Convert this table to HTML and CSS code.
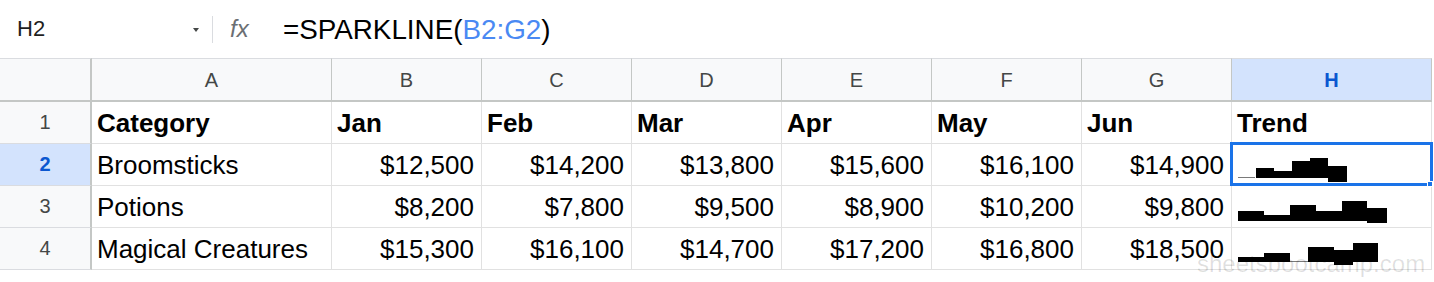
FILE: index.html
```html
<!DOCTYPE html>
<html>
<head>
<meta charset="utf-8">
<link rel="stylesheet" href="styles.css">
</head>
<body>
<div class="page">
  <div class="formula-bar">
    <div class="name-box"><span class="name">H2</span><span class="caret"></span></div>
    <div class="sep"></div>
    <div class="fx">fx</div>
    <div class="formula">=SPARKLINE(<span class="ref">B2:G2</span>)</div>
  </div>
  <div class="grid">
    <div class="hd corner"></div>
    <div class="hd col">A</div>
    <div class="hd col">B</div>
    <div class="hd col">C</div>
    <div class="hd col">D</div>
    <div class="hd col">E</div>
    <div class="hd col">F</div>
    <div class="hd col">G</div>
    <div class="hd col sel">H</div>

    <div class="rh">1</div>
    <div class="c b">Category</div>
    <div class="c b">Jan</div>
    <div class="c b">Feb</div>
    <div class="c b">Mar</div>
    <div class="c b">Apr</div>
    <div class="c b">May</div>
    <div class="c b">Jun</div>
    <div class="c b">Trend</div>

    <div class="rh sel">2</div>
    <div class="c">Broomsticks</div>
    <div class="c n">$12,500</div>
    <div class="c n">$14,200</div>
    <div class="c n">$13,800</div>
    <div class="c n">$15,600</div>
    <div class="c n">$16,100</div>
    <div class="c n">$14,900</div>
    <div class="c spark active">
      <svg class="sl" width="199" height="41" viewBox="0 0 199 41">
        <rect class="ln" x="6" y="33" width="17" height="1"/>
        <rect x="24" y="24" width="18" height="10"/>
        <rect x="42" y="27" width="18" height="7"/>
        <rect x="60" y="17" width="18" height="17"/>
        <rect x="78" y="14" width="18" height="20"/>
        <rect x="96" y="22" width="19" height="16"/>
      </svg>
      <span class="handle"></span>
    </div>

    <div class="rh">3</div>
    <div class="c">Potions</div>
    <div class="c n">$8,200</div>
    <div class="c n">$7,800</div>
    <div class="c n">$9,500</div>
    <div class="c n">$8,900</div>
    <div class="c n">$10,200</div>
    <div class="c n">$9,800</div>
    <div class="c spark">
      <svg class="sl" width="199" height="41" viewBox="0 0 199 41">
        <rect x="6" y="25" width="26" height="10"/>
        <rect x="32" y="29" width="26" height="6"/>
        <rect x="58" y="19" width="26" height="16"/>
        <rect x="84" y="25" width="26" height="10"/>
        <rect x="110" y="15" width="25" height="20"/>
        <rect x="135" y="22" width="20" height="15"/>
      </svg>
    </div>

    <div class="rh">4</div>
    <div class="c">Magical Creatures</div>
    <div class="c n">$15,300</div>
    <div class="c n">$16,100</div>
    <div class="c n">$14,700</div>
    <div class="c n">$17,200</div>
    <div class="c n">$16,800</div>
    <div class="c n">$18,500</div>
    <div class="c spark">
      <svg class="sl" width="199" height="41" viewBox="0 0 199 41">
        <rect x="6" y="29" width="26" height="5"/>
        <rect x="32" y="25" width="26" height="9"/>
        <rect class="ln" x="58" y="33" width="18" height="1"/>
        <rect x="76" y="19" width="26" height="15"/>
        <rect x="102" y="22" width="19" height="15"/>
        <rect x="121" y="15" width="25" height="19"/>
      </svg>
    </div>
  </div>
  <div class="watermark">sheetsbootcamp.com</div>
</div>
</body>
</html>
```
FILE: styles.css
```css
html, body {
  margin: 0;
  padding: 0;
  background: #ffffff;
}
body {
  font-family: "Liberation Sans", Arial, sans-serif;
  color: #000000;
}
.page {
  position: relative;
  width: 1434px;
  height: 282px;
  overflow: hidden;
}
.formula-bar {
  display: flex;
  align-items: center;
  height: 58px;
}
.name-box {
  width: 212px;
  box-sizing: border-box;
  padding-left: 17px;
  padding-right: 13px;
  display: flex;
  align-items: center;
  justify-content: space-between;
}
.name {
  font-size: 22px;
  color: #1f1f1f;
}
.caret {
  width: 0;
  height: 0;
  border-left: 3px solid transparent;
  border-right: 3px solid transparent;
  border-top: 4px solid #444746;
  margin-top: 1px;
}
.sep {
  width: 1px;
  height: 27px;
  background: #dadce0;
}
.fx {
  width: 70px;
  box-sizing: border-box;
  padding-left: 17px;
  font-style: italic;
  font-size: 24px;
  color: #6b6f73;
}
.formula {
  font-size: 27.8px;
  color: #000000;
  padding-top: 2px;
}
.ref {
  color: #4a89f3;
}
.grid {
  display: grid;
  grid-template-columns: 92px 240px repeat(6, 150px) 200px;
  grid-template-rows: 44px repeat(4, 42px);
}
.hd {
  box-sizing: border-box;
  background: #f8f9fa;
  border-top: 1px solid #dadce0;
  border-bottom: 2px solid #c4c7c5;
  border-right: 1px solid #c4c7c5;
  font-size: 20px;
  color: #444746;
  display: flex;
  align-items: center;
  justify-content: center;
  padding-top: 2px;
}
.corner {
  border-right: 2px solid #c4c7c5;
}
.hd.sel {
  background: #d3e3fd;
  color: #0b57d0;
  font-weight: bold;
}
.rh {
  box-sizing: border-box;
  background: #f8f9fa;
  border-right: 2px solid #c4c7c5;
  border-bottom: 1px solid #dadce0;
  font-size: 20px;
  color: #444746;
  display: flex;
  align-items: center;
  justify-content: center;
}
.rh.sel {
  background: #d3e3fd;
  color: #0b57d0;
  font-weight: bold;
}
.c {
  box-sizing: border-box;
  border-right: 1px solid #e1e1e1;
  border-bottom: 1px solid #e1e1e1;
  font-size: 26px;
  line-height: 43px;
  padding: 0 7px 0 5px;
  white-space: nowrap;
  overflow: hidden;
}
.c.b {
  font-weight: bold;
}
.c.n {
  text-align: right;
}
.spark {
  padding: 0;
  position: relative;
  overflow: visible;
}
.sl {
  display: block;
}
.sl rect {
  fill: #000000;
}
.sl rect.ln {
  fill: #7a7a7a;
}
.active::after {
  content: "";
  position: absolute;
  left: -2px;
  top: -2px;
  width: 203px;
  height: 44px;
  box-sizing: border-box;
  border: 3px solid #1a73e8;
  pointer-events: none;
}
.handle {
  position: absolute;
  right: -2px;
  bottom: -2px;
  width: 6px;
  height: 6px;
  box-sizing: border-box;
  background: #1a73e8;
  border: 1px solid #ffffff;
  z-index: 2;
}
.watermark {
  position: absolute;
  left: 1197px;
  top: 250px;
  font-size: 24px;
  color: rgba(0, 0, 0, 0.12);
  white-space: nowrap;
}
```
